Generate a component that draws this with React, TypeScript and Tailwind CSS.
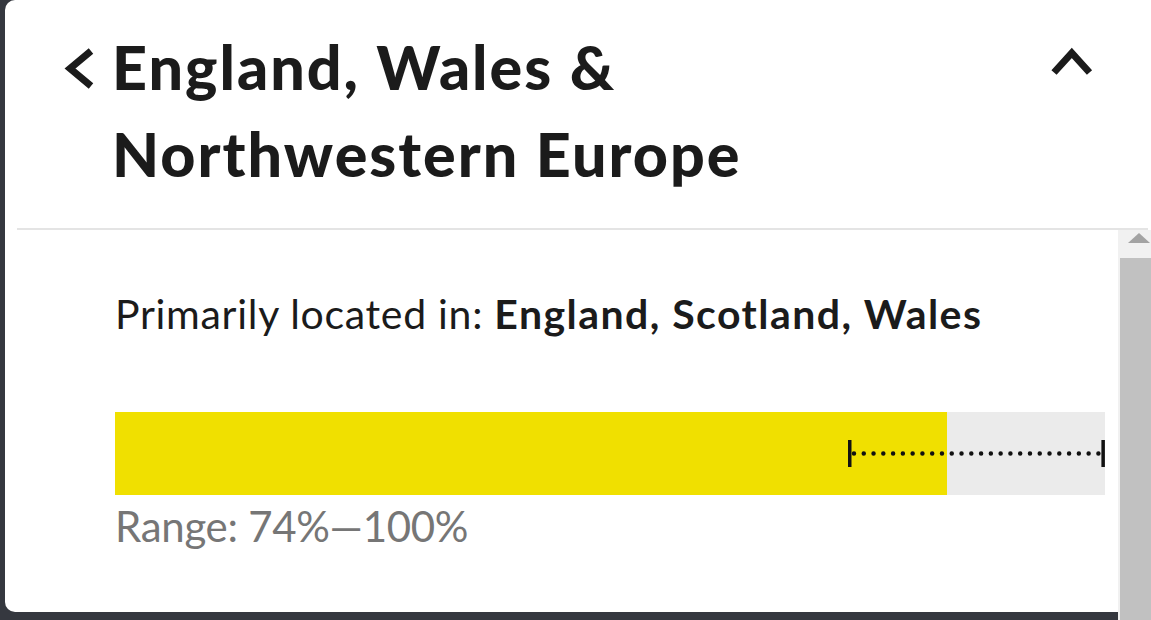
import React from "react";

export default function App() {
  const font = { fontFamily: "Lato, 'Noto Sans', sans-serif" };
  return (
    <div className="h-[620px] w-[1151px] bg-[#35383f] flex flex-col overflow-hidden" style={font}>
      <div className="ml-[5px] flex-1 flex flex-col">
        {/* header */}
        <div className="bg-white rounded-tl-[10px] flex flex-col">
          <div className="flex items-start pt-[23px] pb-[31px] pl-[55px] pr-[53px]">
            <svg width="40" height="48" viewBox="0 0 40 48" className="mt-[21px] shrink-0">
              <polyline points="31,7 10,24.5 31,42" fill="none" stroke="#1b1b1b" strokeWidth="7" strokeLinejoin="miter" strokeLinecap="butt" />
            </svg>
            <h1 className="ml-[12px] flex-1 text-[61px] leading-[87px] font-black tracking-[2px] text-[#1b1b1b]">
              England, Wales &amp;
              <br />
              Northwestern Europe
            </h1>
            <svg width="52" height="36" viewBox="0 0 52 36" className="mt-[21px] shrink-0">
              <polyline points="8,28.5 25.8,9 43.5,28.5" fill="none" stroke="#1b1b1b" strokeWidth="7" strokeLinejoin="miter" strokeLinecap="butt" />
            </svg>
          </div>
          <div className="h-[2px] bg-[#e4e4e4] ml-[12px] mr-[3px]" />
        </div>
        {/* body */}
        <div className="flex flex-1">
          <div className="flex-1 flex flex-col">
            <div className="bg-white rounded-bl-[10px] h-[382px] pt-[58px] pl-[110px] pr-[13px]">
              <p className="text-[41px] leading-[52px] text-[#1b1b1b] tracking-[0.7px] whitespace-nowrap">
                Primarily located in: <span className="font-bold tracking-[1.45px]">England, Scotland, Wales</span>
              </p>
              <div className="mt-[72px] h-[83px] bg-[#ebebeb] relative flex">
                <div className="h-full bg-[#f0e000] w-[84%]" />
                <svg className="absolute top-[27px] left-[74%] right-0" height="30" width="258" viewBox="0 0 258 30" preserveAspectRatio="none" style={{ width: "26%" }}>
                  <rect x="0" y="1" width="3.5" height="27" fill="#111" />
                  <line x1="6" y1="14.5" x2="254" y2="14.5" stroke="#111" strokeWidth="4.5" strokeLinecap="round" strokeDasharray="0 9.8" />
                  <rect x="254" y="1" width="3.5" height="27" fill="#111" />
                </svg>
              </div>
              <p className="mt-[5px] text-[42px] leading-[52px] text-[#767676] tracking-[-0.3px]">Range: 74%—100%</p>
            </div>
          </div>
          {/* scrollbar */}
          <div className="w-[33px] bg-[#f1f1f1] flex flex-col">
            <div className="h-[28px] flex justify-center pt-[2px] pl-[8px]">
              <svg width="22" height="12" viewBox="0 0 22 12">
                <polygon points="0,11 11,1 22,11" fill="#a3a3a3" />
              </svg>
            </div>
            <div className="flex-1 ml-[2px] bg-[#c1c1c1]" />
          </div>
        </div>
      </div>
    </div>
  );
}
